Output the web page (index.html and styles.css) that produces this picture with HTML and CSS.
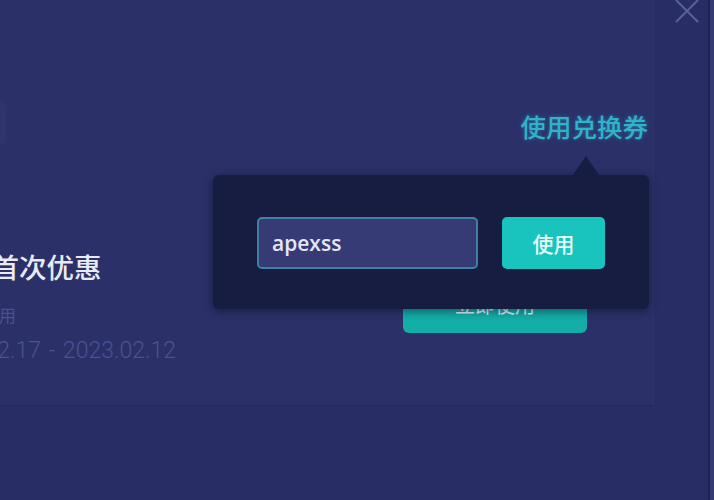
FILE: index.html
```html
<!DOCTYPE html>
<html lang="zh-CN">
<head>
<meta charset="utf-8">
<title>兑换券</title>
<link rel="stylesheet" href="styles.css">
</head>
<body>
<div class="modal">
  <div class="card">
    <div class="info">
      <div class="thumb"></div>
      <div class="title">新用户首次优惠</div>
      <div class="sub">全场均可使用</div>
      <div class="date">2022.02.17 - 2023.02.12</div>
    </div>
    <div class="actions">
      <a class="redeem-link">使用兑换券</a>
      <button class="use-now">立即使用</button>
    </div>
  </div>

  <div class="popover">
    <div class="code-input">apexss</div>
    <button class="apply">使用</button>
  </div>

  <svg class="close" width="26" height="24" viewBox="0 0 26 24" aria-label="关闭">
    <path d="M2 1 L24 23 M24 1 L2 23" stroke="#5a609e" stroke-width="2" fill="none"/>
  </svg>
</div>
</body>
</html>
```

FILE: styles.css
```css
* { box-sizing: border-box; }

html, body {
  margin: 0;
  padding: 0;
  background: #282e65;
}

body {
  font-family: "Noto Sans CJK SC", "Noto Sans", sans-serif;
}

.modal {
  position: relative;
  width: 714px;
  height: 500px;
  overflow: hidden;
  background: #282e65;
  box-shadow: inset -4px 0 0 #353a74, inset -6px 0 0 #1f2352;
}

.card {
  display: flex;
  justify-content: space-between;
  width: 754px;
  height: 406px;
  margin-left: -100px;
  padding-left: 14px;
  background: #2b3068;
  border-bottom: 1px solid #252a5c;
  border-right: 1px solid #2d336c;
}

.info {
  display: flex;
  flex-direction: column;
  padding-top: 100px;
}

.thumb {
  width: 92px;
  height: 46px;
  border-radius: 8px;
  background: #2f346d;
}

.title {
  margin-top: 103px;
  margin-left: -5px;
  font-size: 27.5px;
  line-height: 34px;
  color: #e8eaf6;
  font-weight: 500;
  white-space: nowrap;
}

.sub {
  margin-top: 20px;
  font-size: 17px;
  line-height: 24px;
  color: #4a5192;
  white-space: nowrap;
}

.date {
  margin-top: 10px;
  margin-left: 14px;
  font-family: Roboto, "Liberation Sans", sans-serif;
  font-weight: 300;
  font-size: 23px;
  line-height: 28px;
  color: #4b5295;
  white-space: pre;
  word-spacing: 2px;
}

.actions {
  display: flex;
  flex-direction: column;
  align-items: flex-end;
  padding-top: 110px;
  padding-right: 5px;
}

.redeem-link {
  font-size: 25.5px;
  line-height: 32px;
  color: #30b2ca;
  font-weight: 500;
  text-shadow: 0 0 4px rgba(40, 190, 215, 0.45);
  white-space: nowrap;
}

.use-now {
  margin-top: 139px;
  margin-right: 61px;
  width: 184px;
  height: 52px;
  padding-bottom: 6px;
  border: none;
  border-radius: 6px;
  background: #14aea8;
  color: #e8fbfa;
  font-family: "Noto Sans CJK SC", sans-serif;
  font-size: 20px;
}

.popover {
  position: absolute;
  left: 213px;
  top: 175px;
  width: 436px;
  height: 134px;
  display: flex;
  gap: 24px;
  padding: 42px 44px 0;
  background: #171c41;
  border-radius: 6px;
  box-shadow: 0 2px 10px rgba(10, 12, 35, 0.55);
}

.popover::before {
  content: "";
  position: absolute;
  top: -19px;
  left: 360px;
  width: 0;
  height: 0;
  border-left: 13px solid transparent;
  border-right: 13px solid transparent;
  border-bottom: 19px solid #171c41;
}

.code-input {
  width: 221px;
  height: 52px;
  display: flex;
  align-items: center;
  padding-left: 13px;
  background: #363b76;
  border: 2px solid #3d82a5;
  border-radius: 5px;
  font-family: "Open Sans", "Liberation Sans", sans-serif;
  font-weight: 600;
  font-size: 21px;
  color: #e4e6f4;
}

.apply {
  width: 103px;
  height: 52px;
  border: none;
  border-radius: 5px;
  background: #18c4bd;
  color: #e9fbfa;
  font-family: "Noto Sans CJK SC", sans-serif;
  font-size: 21px;
  font-weight: 500;
}

.close {
  position: absolute;
  left: 674px;
  top: -1px;
}
```
